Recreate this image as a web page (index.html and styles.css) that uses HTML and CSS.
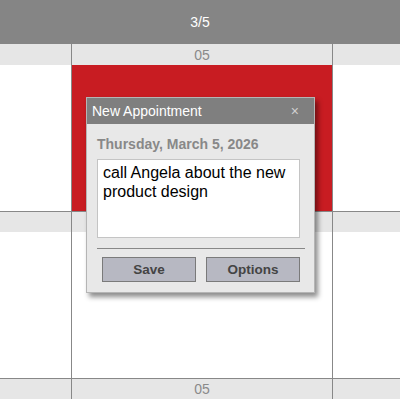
FILE: index.html
```html
<!DOCTYPE html>
<html>
<head>
<meta charset="utf-8">
<link rel="stylesheet" href="styles.css">
</head>
<body>
<div class="header">3/5</div>
<div class="week first">
  <div class="band"><div class="c side"></div><div class="c mid">05</div><div class="c side"></div></div>
  <div class="days"><div class="c side"></div><div class="c mid red"></div><div class="c side"></div></div>
</div>
<div class="week">
  <div class="band"><div class="c side"></div><div class="c mid"></div><div class="c side"></div></div>
  <div class="days"><div class="c side"></div><div class="c mid"></div><div class="c side"></div></div>
</div>
<div class="week">
  <div class="band"><div class="c side"></div><div class="c mid">05</div><div class="c side"></div></div>
</div>

<div class="dialog">
  <div class="titlebar"><span>New Appointment</span><span class="close">×</span></div>
  <div class="dbody">
    <div class="date">Thursday, March 5, 2026</div>
    <div class="text">call Angela about the new product design</div>
    <div class="sep"></div>
    <div class="buttons">
      <div class="btn">Save</div>
      <div class="btn">Options</div>
    </div>
  </div>
</div>
</body>
</html>
```
FILE: styles.css
```css
html, body { margin: 0; padding: 0; }
body {
  width: 400px; height: 400px; overflow: hidden; position: relative;
  font-family: "Liberation Sans", Arial, sans-serif; background: #fff;
}
.header {
  height: 44px; background: #858585; color: #fff;
  font-size: 14px; display: flex; align-items: center; justify-content: center;
}
.week { border-top: 1px solid #888; }
.week.first { border-top: none; }
.band, .days { display: flex; }
.band { height: 20px; background: #e6e6e6; }
.week.first .band { height: 21px; }
.days { height: 146px; }
.c.side:first-child { width: 71px; }
.c.side:last-child { flex: 1; }
.c.mid {
  width: 260px; border-left: 1px solid #888; border-right: 1px solid #888;
  display: flex; align-items: center; justify-content: center;
  font-size: 14px; color: #8a8a8a;
}
.c.mid.red { background: #c81c22; }

.dialog {
  position: absolute; left: 86px; top: 97px; width: 227px; height: 194px;
  border: 1px solid #b5b5b5; background: #e8e8e8;
  box-shadow: 3px 4px 5px rgba(0,0,0,0.45);
}
.titlebar {
  height: 26px; background: #7f7f7f; color: #fff; font-size: 14px;
  display: flex; align-items: center; justify-content: space-between;
  padding: 0 15px 0 5px;
}
.close { font-size: 14px; color: #d0d0d0; }
.dbody { padding: 12px 10px 0 10px; }
.date { font-size: 14px; font-weight: bold; color: #888; height: 23px; line-height: 16px; }
.text {
  width: 196px; height: 71px; background: #fff; border: 1px solid #c4c4c4;
  padding: 3px 0 3px 5px; font-size: 16px; line-height: 19px; color: #000;
}
.sep { width: 208px; height: 1px; background: #888; margin-top: 10px; }
.buttons { display: flex; gap: 10px; padding: 8px 0 0 5px; }
.btn {
  width: 92px; height: 23px; background: #b7b8c2; border: 1px solid #7a7a7a;
  display: flex; align-items: center; justify-content: center;
  font-size: 13.5px; font-weight: bold; color: #444;
}
```
